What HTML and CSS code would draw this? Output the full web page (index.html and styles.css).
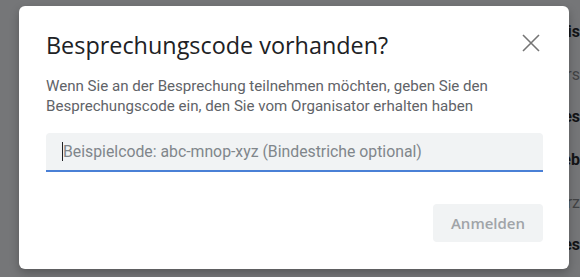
FILE: index.html
```html
<!DOCTYPE html>
<html lang="de">
<head>
	<meta charset="UTF-8">
	<title>Besprechungscode vorhanden?</title>
	<link rel="stylesheet" href="styles.css">
</head>
<body>
<div id="page">
	<ul id="behind">
		<li class="strong">is</li>
		<li>rs</li>
		<li class="strong">es</li>
		<li class="strong">eb</li>
		<li>rz</li>
		<li class="strong">es</li>
	</ul>
</div>
<div id="scrim"></div>
<div id="dialog">
	<div class="head">
		<h1 class="title">Besprechungscode vorhanden?</h1>
		<button class="close" type="button" aria-label="Schließen">
			<svg width="24" height="24" viewBox="0 0 24 24">
				<path d="M4 4 L20 20 M20 4 L4 20" stroke="#757575" stroke-width="1.6" fill="none"/>
			</svg>
		</button>
	</div>
	<p class="text">Wenn Sie an der Besprechung teilnehmen möchten, geben Sie den Besprechungscode ein, den Sie vom Organisator erhalten haben</p>
	<div class="field">
		<span class="caret"></span>
		<span class="placeholder">Beispielcode: abc-mnop-xyz (Bindestriche optional)</span>
	</div>
	<div class="actions">
		<button class="join" type="button">Anmelden</button>
	</div>
</div>
</body>
</html>
```

FILE: styles.css
```css
* {
	padding: 0;
	margin: 0;
	box-sizing: border-box;
}

li {
	list-style: none;
}

body {
	width: 580px;
	height: 277px;
	overflow: hidden;
	font-family: Roboto, "Liberation Sans", sans-serif;
	background-color: #ffffff;
}

#page {
	width: 580px;
	height: 277px;
	background-color: #f6f6f6;
	display: flex;
	justify-content: flex-end;
}

#behind {
	width: 14px;
	padding-top: 21px;
	display: flex;
	flex-direction: column;
	font-size: 16px;
	color: #777;
	overflow: hidden;
	white-space: nowrap;
	direction: rtl;
}

#behind li {
	height: 43.5px;
	line-height: 22px;
}

#behind .strong {
	color: #000;
	font-weight: 700;
}

#scrim {
	position: absolute;
	left: 0;
	top: 0;
	width: 580px;
	height: 277px;
	background-color: rgba(32, 33, 36, 0.6);
}

#dialog {
	position: absolute;
	left: 19px;
	top: 6px;
	width: 550px;
	height: 263px;
	background-color: #fff;
	border-radius: 6px;
	padding: 24px 26px 0 27px;
	box-shadow: 0 4px 10px rgba(0, 0, 0, 0.25);
}

.head {
	display: flex;
	justify-content: space-between;
	align-items: flex-start;
}

.title {
	font-family: "Open Sans", Roboto, sans-serif;
	font-weight: 400;
	font-size: 23.4px;
	line-height: 30px;
	color: #202124;
}

.close {
	border: none;
	background: none;
	width: 24px;
	height: 24px;
	margin-top: 1px;
}

.text {
	margin-top: 16px;
	font-size: 15.1px;
	line-height: 20px;
	color: #5f6368;
	width: 490px;
}

.field {
	margin-top: 17px;
	width: 497px;
	height: 39px;
	background-color: #f1f3f4;
	border-bottom: 2px solid #4a80d6;
	border-radius: 4px 4px 0 0;
	display: flex;
	align-items: center;
	padding-left: 16px;
}

.caret {
	width: 1px;
	height: 19px;
	background-color: #202124;
}

.placeholder {
	font-size: 15.8px;
	color: #80868b;
}

.actions {
	display: flex;
	justify-content: flex-end;
	margin-top: 32px;
	width: 497px;
}

.join {
	width: 110px;
	height: 38px;
	border: none;
	border-radius: 4px;
	background-color: #f1f3f4;
	color: #a0a4a8;
	font-family: "Open Sans", Roboto, sans-serif;
	font-size: 15px;
	font-weight: 600;
}
```
